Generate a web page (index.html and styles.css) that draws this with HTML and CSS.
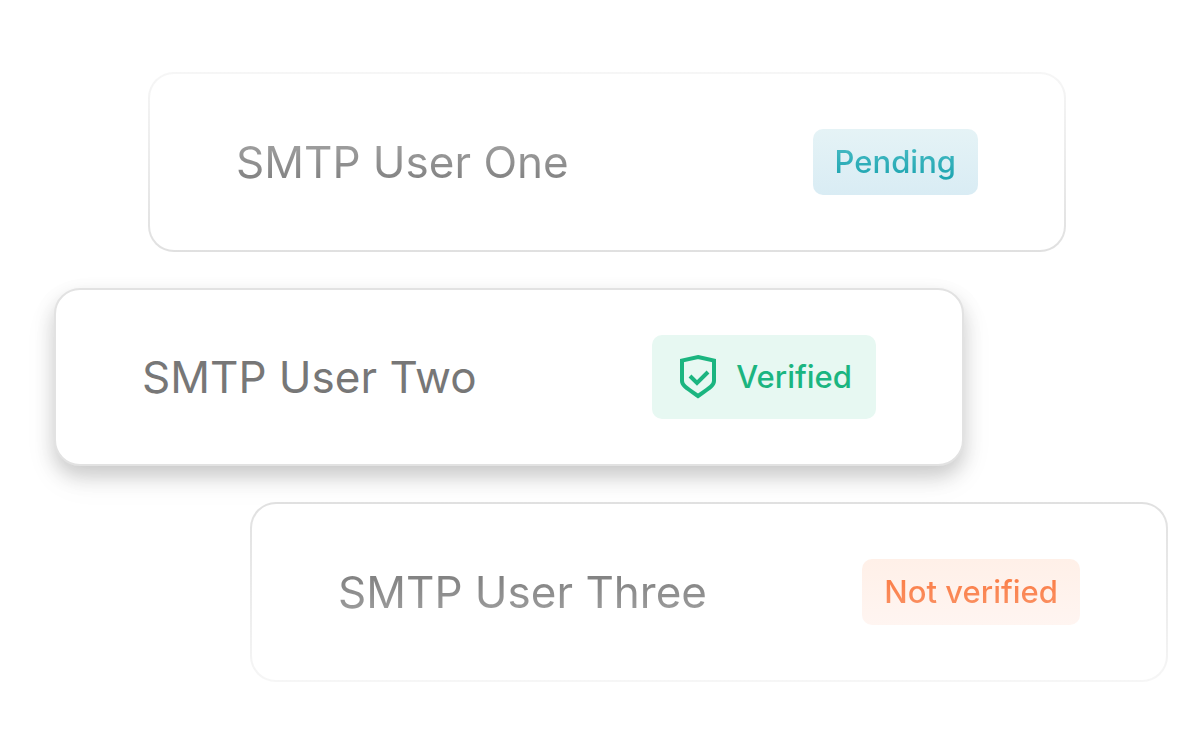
FILE: index.html
```html
<!DOCTYPE html>
<html lang="en">
<head>
    <meta charset="UTF-8">
    <meta name="viewport" content="width=device-width, initial-scale=1.0">
    <title>SMTP Users</title>
    <link rel="stylesheet" href="styles.css">
</head>
<body>
    <ul class="user-list">
        <li class="user-card user-card-first">
            <span class="user-name">SMTP User One</span>
            <span class="badge badge-pending"><span class="badge-label">Pending</span></span>
        </li>
        <li class="user-card user-card-active">
            <span class="user-name">SMTP User Two</span>
            <span class="badge badge-verified">
                <svg class="badge-icon" viewBox="0 0 44 48" aria-hidden="true">
                    <path d="M22 4 L38 7.500 V28 C38 32 35 34 22 43 C9 34 6 32 6 28 V7.500 Z"/>
                    <path d="M14 23 L21 30 L32 19"/>
                </svg>
                <span class="badge-label">Verified</span>
            </span>
        </li>
        <li class="user-card user-card-last">
            <span class="user-name">SMTP User Three</span>
            <span class="badge badge-failed"><span class="badge-label">Not verified</span></span>
        </li>
    </ul>
</body>
</html>
```

FILE: styles.css
```css
* {
    box-sizing: border-box;
}
body {
    margin: 0;
    background-color: #fff;
    font-family: Inter, sans-serif;
}
.user-list {
    display: flex;
    flex-direction: column;
    gap: 36px;
    margin: 0;
    padding: 72px 32px 72px 54px;
    list-style: none;
}
.user-card {
    display: flex;
    align-items: center;
    justify-content: space-between;
    height: 180px;
    padding: 0 86px;
    border: 2px solid transparent;
    border-radius: 26px;
}
.user-card-first {
    margin: 0 102px 0 94px;
    background: linear-gradient(#fff, #fff) padding-box, linear-gradient(#f6f6f6, #e0e0e0) border-box;
}
.user-card-active {
    height: 178px;
    margin-right: 204px;
    border-color: #e2e2e2;
    background-color: #fff;
    box-shadow: 0 10px 20px rgba(0, 0, 0, 0.18), 0 14px 36px rgba(0, 0, 0, 0.05);
}
.user-card-last {
    margin-left: 196px;
    background: linear-gradient(#fff, #fff) padding-box, linear-gradient(#e0e0e0, #f6f6f6) border-box;
}
.user-name {
    color: #777;
    font-size: 44px;
    line-height: 51px;
}
.user-card-first .user-name {
    background: linear-gradient(#a4a4a4, #7c7c7c);
    background-clip: text;
    color: transparent;
}
.user-card-last .user-name {
    background: linear-gradient(#7c7c7c, #a0a0a0);
    background-clip: text;
    color: transparent;
}
.badge {
    display: flex;
    align-items: center;
    gap: 16px;
    padding: 12px 22px;
    border-radius: 10px;
    font-size: 31px;
    font-weight: 500;
    line-height: 42px;
}
.badge-pending {
    background: linear-gradient(#e5f3f6, #d9ecf4);
}
.badge-pending .badge-label {
    background: linear-gradient(#4cbdc6, #18a2ae);
    background-clip: text;
    color: transparent;
}
.badge-verified {
    padding: 18px 24px;
    background-color: #e7f8f2;
    color: #1bb580;
}
.badge-failed {
    background: linear-gradient(#fff0e8, #fff5f1);
}
.badge-failed .badge-label {
    background: linear-gradient(#fb7a42, #fa9366);
    background-clip: text;
    color: transparent;
}
.badge-icon {
    width: 44px;
    height: 48px;
    fill: none;
    stroke: currentColor;
    stroke-width: 4;
}
```
